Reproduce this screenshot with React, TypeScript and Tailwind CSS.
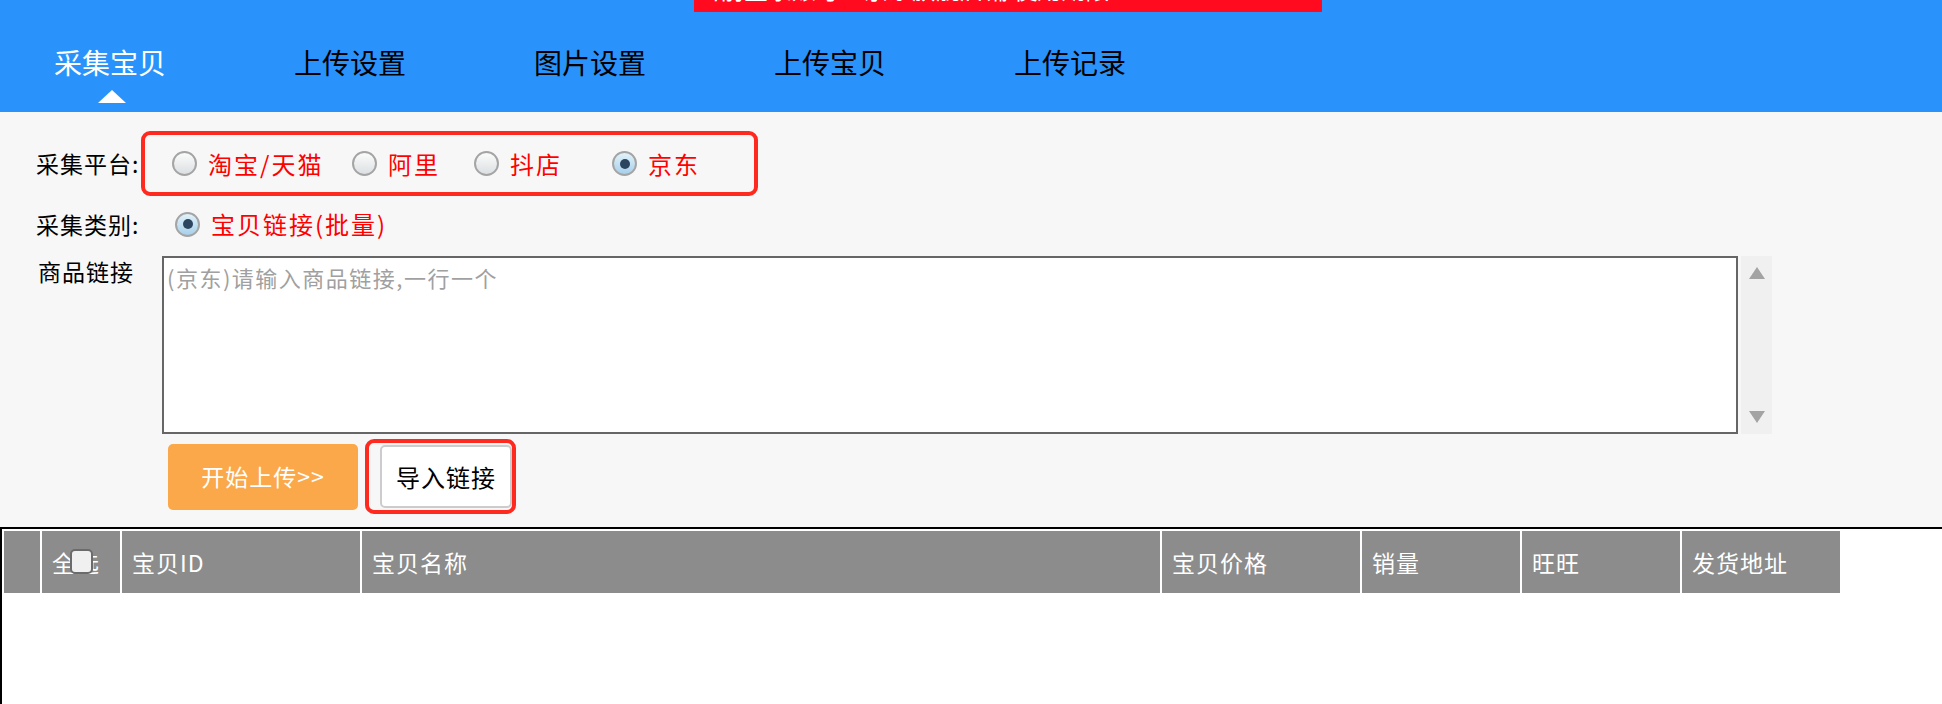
import React from 'react';

const navItems = ['采集宝贝', '上传设置', '图片设置', '上传宝贝', '上传记录'];

const platforms = [
  { name: '淘宝/天猫', checked: false, width: 'w-[180px]' },
  { name: '阿里', checked: false, width: 'w-[122px]' },
  { name: '抖店', checked: false, width: 'w-[138px]' },
  { name: '京东', checked: true, width: '' },
];

const columns = [
  { label: '', width: 'w-[36px]' },
  { label: '全选', width: 'w-[78px]', check: true },
  { label: '宝贝ID', width: 'w-[238px]' },
  { label: '宝贝名称', width: 'w-[798px]' },
  { label: '宝贝价格', width: 'w-[198px]' },
  { label: '销量', width: 'w-[158px]' },
  { label: '旺旺', width: 'w-[158px]' },
  { label: '发货地址', width: 'w-[158px]' },
];

const Radio = ({ checked }: { checked?: boolean }) => (
  <span
    className={`flex h-[25px] w-[25px] shrink-0 items-center justify-center rounded-full border-2 border-[#a4a4a4] bg-linear-to-b ${
      checked ? 'from-[#e2f2fb] to-[#a6d0ea]' : 'from-[#fbfbfb] to-[#dce0e3]'
    }`}
  >
    {checked && <span className="h-[10px] w-[10px] rounded-full bg-[#2c4660]" />}
  </span>
);

const App = () => {
  return (
    <div className="flex min-h-[704px] w-[1942px] flex-col bg-[#f7f7f7] font-['Noto_Sans_CJK_SC','Noto_Sans',sans-serif]">
      {/* Top nav */}
      <div className="relative h-[112px] shrink-0 bg-[#2993fb]">
        <div className="absolute left-[694px] top-0 h-[12px] w-[628px] overflow-hidden bg-[#ff0a1e]">
          <p className="-mt-[23px] whitespace-nowrap pl-[2px] text-[24px] leading-none text-white">
            当前登录账号：京东旗舰店铺 使用期限：2025-12-31
          </p>
        </div>
        <div className="flex pl-[54px] pt-[47px]">
          {navItems.map((item, i) => (
            <div key={item} className="flex w-[240px] flex-col items-start">
              <span className={`text-[28px] leading-[30px] ${i === 0 ? 'text-white' : 'text-black'}`}>{item}</span>
              {i === 0 && (
                <span className="ml-[44px] mt-[13px] h-0 w-0 border-b-[13px] border-l-[14px] border-r-[14px] border-b-white border-l-transparent border-r-transparent" />
              )}
            </div>
          ))}
        </div>
      </div>

      {/* Form */}
      <div className="flex flex-col pl-[36px] pt-[19px]">
        <div className="flex items-center">
          <span className="w-[105px] text-[23px] tracking-[1px] text-black">采集平台:</span>
          <div className="flex h-[65px] w-[617px] items-center rounded-[9px] border-4 border-[#ff2a1f] pl-[27px]">
            {platforms.map((p) => (
              <label key={p.name} className={`flex items-center ${p.width}`}>
                <Radio checked={p.checked} />
                <span className="ml-[11px] text-[24px] tracking-[2px] text-[#ff0000]">{p.name}</span>
              </label>
            ))}
          </div>
        </div>

        <div className="flex h-[56px] items-center">
          <span className="w-[139px] text-[23px] tracking-[1px] text-black">采集类别:</span>
          <Radio checked />
          <span className="ml-[11px] text-[24px] tracking-[2px] text-[#ff0000]">宝贝链接(批量)</span>
        </div>

        <div className="mt-[4px] flex items-start">
          <span className="w-[126px] pl-[2px] text-[23px] leading-[30px] tracking-[1px] text-black">商品链接</span>
          <div className="h-[178px] w-[1576px] border-2 border-[#666666] bg-white px-[3px] pt-[4px] text-[22px] leading-[30px] tracking-[1.5px] text-[#a0a0a0]">
            (京东)请输入商品链接,一行一个
          </div>
          <div className="ml-[3px] flex h-[178px] w-[31px] flex-col items-center justify-between bg-[#f0f0f0] py-[11px]">
            <span className="h-0 w-0 border-b-[12px] border-l-[8px] border-r-[8px] border-b-[#a3a3a3] border-l-transparent border-r-transparent" />
            <span className="h-0 w-0 border-l-[8px] border-r-[8px] border-t-[12px] border-l-transparent border-r-transparent border-t-[#a3a3a3]" />
          </div>
        </div>

        <div className="mt-[5px] flex items-center pl-[132px]">
          <button className="h-[66px] w-[190px] rounded-[5px] bg-[#fba84a] text-[23px] tracking-[1px] text-white">开始上传&gt;&gt;</button>
          <div className="ml-[7px] flex h-[75px] w-[151px] items-center rounded-[9px] border-4 border-[#ff2a1f] pl-[11px]">
            <button className="h-[63px] w-[132px] rounded-[5px] border-2 border-[#cccccc] bg-white text-[24px] tracking-[1px] text-black">
              导入链接
            </button>
          </div>
        </div>
      </div>

      {/* Result table */}
      <div className="mt-[13px] flex-1 border-l-2 border-t-2 border-black bg-white">
        <div className="flex gap-[2px] p-[2px]">
          {columns.map((c) => (
            <div
              key={c.label || 'idx'}
              className={`relative flex h-[62px] shrink-0 items-center bg-[#8c8c8c] pl-[10px] text-[23px] tracking-[1px] text-white ${c.width}`}
            >
              {c.label}
              {c.check && (
                <span className="absolute left-[28px] top-[18px] h-[25px] w-[23px] rounded-[5px] border-2 border-[#6b6b6b] bg-[#f0f0f0]" />
              )}
            </div>
          ))}
        </div>
      </div>
    </div>
  );
};

export default App;
